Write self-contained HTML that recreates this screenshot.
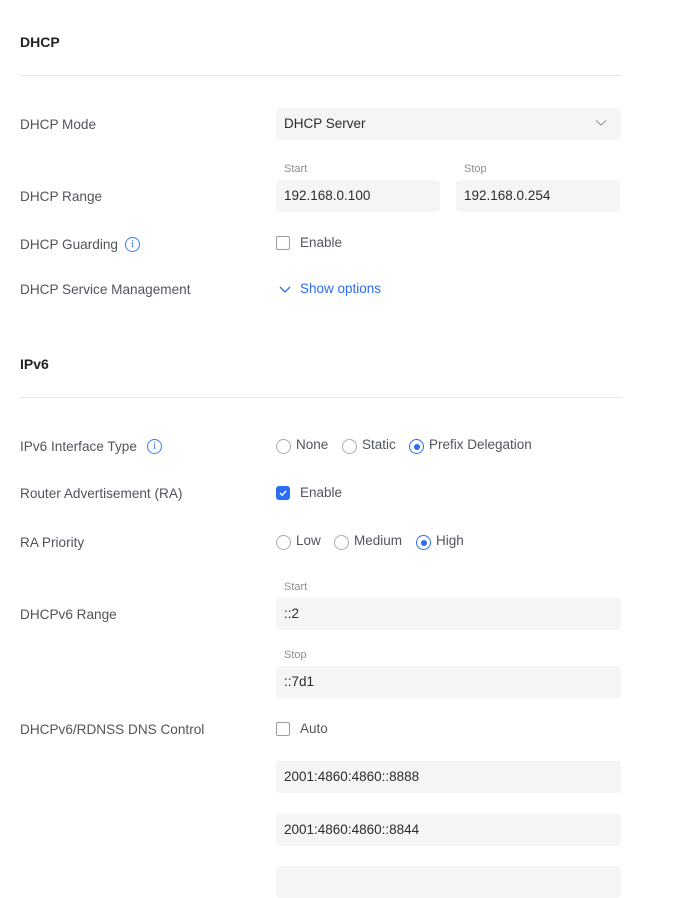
<!DOCTYPE html>
<html><head><meta charset="utf-8"><style>
body{margin:0;width:677px;height:870px;background:#fff;font-family:"Liberation Sans",sans-serif;position:relative;overflow:hidden}
.a{position:absolute;white-space:nowrap}
.h{left:20px;font-size:14px;font-weight:bold;color:#212327}
.hr{position:absolute;left:20px;width:602px;height:1px;background:#e4e5e8}
.l{left:20px;font-size:13.6px;color:#50555c}
.in{position:absolute;background:#f4f5f7;border-radius:4px;height:32px;font-size:13.5px;color:#2a2c30;line-height:32px;padding-left:8px;box-sizing:border-box}
.sm{font-size:11px;color:#8a8f96}
.t{font-size:13.5px;color:#50555c}
.cb{position:absolute;width:14px;height:14px;border:1px solid #9a9ea4;border-radius:2px;box-sizing:border-box}
.rd{position:absolute;width:15px;height:15px;border:1px solid #a8acb1;border-radius:50%;box-sizing:border-box}
.rd.on{border-color:#2b6ef5}
.rd.on::after{content:"";position:absolute;left:3.5px;top:3.5px;width:6px;height:6px;border-radius:50%;background:#2b6ef5}
.info{position:absolute;width:15px;height:15px;border:1px solid #3b7bf6;border-radius:50%;box-sizing:border-box;color:#3b7bf6;font-size:10px;text-align:center;line-height:13px;font-family:"Liberation Serif",serif}
</style></head><body>
<div class="a h" style="top:34px">DHCP</div>
<div class="hr" style="top:75px"></div>
<div class="a l" style="top:117px">DHCP Mode</div>
<div class="in" style="left:276px;top:108px;width:345px">DHCP Server</div>
<svg class="a" style="left:595px;top:119px" width="12" height="8"><path d="M1 1.5l5 4.5 5-4.5" fill="none" stroke="#8a8f96" stroke-width="1"/></svg>
<div class="a sm" style="left:284px;top:163px">Start</div>
<div class="a sm" style="left:464px;top:163px">Stop</div>
<div class="a l" style="top:189px">DHCP Range</div>
<div class="in" style="left:276px;top:180px;width:164px">192.168.0.100</div>
<div class="in" style="left:456px;top:180px;width:164px">192.168.0.254</div>
<div class="a l" style="top:237px">DHCP Guarding</div>
<div class="info" style="left:125px;top:237px">i</div>
<div class="cb" style="left:276px;top:236px"></div>
<div class="a t" style="left:300px;top:235px">Enable</div>
<div class="a l" style="top:282px">DHCP Service Management</div>
<svg class="a" style="left:279px;top:285px" width="12" height="9"><path d="M1 2l5 5 5-5" fill="none" stroke="#2b6ef5" stroke-width="1.3"/></svg>
<div class="a" style="left:300px;top:281px;font-size:13.5px;color:#2b6ef5">Show options</div>

<div class="a h" style="top:356px">IPv6</div>
<div class="hr" style="top:397px"></div>
<div class="a l" style="top:439px">IPv6 Interface Type</div>
<div class="info" style="left:147px;top:439px">i</div>
<div class="rd" style="left:276px;top:439px"></div><div class="a t" style="left:296px;top:437px">None</div>
<div class="rd" style="left:342px;top:439px"></div><div class="a t" style="left:362px;top:437px">Static</div>
<div class="rd on" style="left:409px;top:439px"></div><div class="a t" style="left:429px;top:437px">Prefix Delegation</div>
<div class="a l" style="top:486px">Router Advertisement (RA)</div>
<div class="cb" style="left:276px;top:486px;background:#2b6ef5;border-color:#2b6ef5;border-radius:3px"></div>
<svg class="a" style="left:276px;top:486px" width="14" height="14"><path d="M4 7l2.2 2.2L10 5" fill="none" stroke="#fff" stroke-width="1.4"/></svg>
<div class="a t" style="left:300px;top:485px">Enable</div>
<div class="a l" style="top:535px">RA Priority</div>
<div class="rd" style="left:276px;top:535px"></div><div class="a t" style="left:296px;top:533px">Low</div>
<div class="rd" style="left:334px;top:535px"></div><div class="a t" style="left:354px;top:533px">Medium</div>
<div class="rd on" style="left:416px;top:535px"></div><div class="a t" style="left:436px;top:533px">High</div>
<div class="a sm" style="left:284px;top:581px">Start</div>
<div class="a l" style="top:607px">DHCPv6 Range</div>
<div class="in" style="left:276px;top:598px;width:345px">::2</div>
<div class="a sm" style="left:284px;top:649px">Stop</div>
<div class="in" style="left:276px;top:666px;width:345px">::7d1</div>
<div class="a l" style="top:722px">DHCPv6/RDNSS DNS Control</div>
<div class="cb" style="left:276px;top:722px"></div>
<div class="a t" style="left:300px;top:721px">Auto</div>
<div class="in" style="left:276px;top:761px;width:345px">2001:4860:4860::8888</div>
<div class="in" style="left:276px;top:814px;width:345px">2001:4860:4860::8844</div>
<div class="in" style="left:276px;top:866px;width:345px"></div>
</body></html>
